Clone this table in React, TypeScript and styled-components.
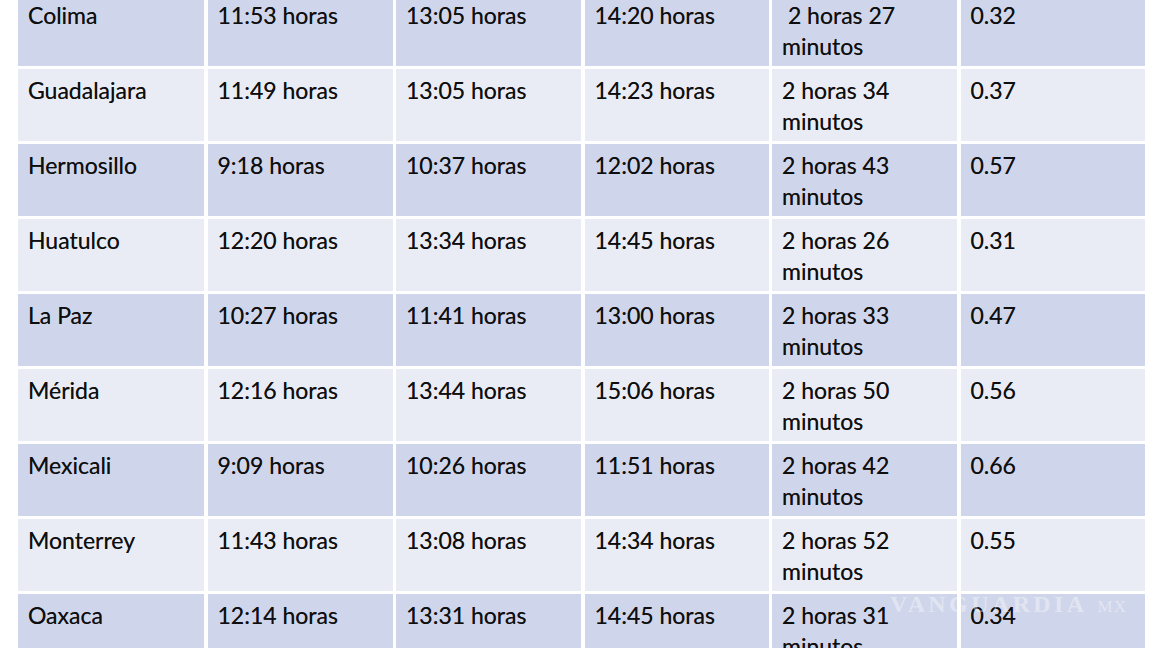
import React from "react";
import styled, { createGlobalStyle } from "styled-components";

const Global = createGlobalStyle`
  html, body { margin: 0; padding: 0; background: #ffffff; }
  body { width: 1152px; height: 648px; overflow: hidden; }
`;

const Page = styled.div`
  position: relative;
  width: 1152px;
  height: 648px;
  overflow: hidden;
  background: #ffffff;
  padding: 0 7px 0 18px;
  box-sizing: border-box;
`;

const Table = styled.div`
  display: grid;
  grid-template-columns: 186px 185px 185px 184px 185px 184px;
  column-gap: 3.5px;
  row-gap: 3.5px;
  margin-top: -6px;
  grid-auto-rows: 71.5px;
`;

const Cell = styled.div<{ $dark: boolean }>`
  background: ${(p) => (p.$dark ? "#cfd5ea" : "#e9ebf5")};
  padding: 6px 6px 0 10px;
  box-sizing: border-box;
  font-family: Lato, "Liberation Sans", sans-serif;
  font-size: 23px;
  line-height: 31px;
  color: #0e0e0e;
  letter-spacing: 0px;
  text-shadow: 0 0 0.4px rgba(0, 0, 0, 0.6);
`;

const Watermark = styled.div`
  position: absolute;
  left: 890px;
  top: 591px;
  display: flex;
  align-items: baseline;
  gap: 10px;
  color: rgba(255, 255, 255, 0.4);
  font-family: "Liberation Serif", serif;
  font-weight: bold;
  pointer-events: none;
`;

const Brand = styled.span`
  font-size: 24px;
  letter-spacing: 3.4px;
`;

const Mx = styled.span`
  font-size: 17px;
  font-weight: normal;
  letter-spacing: 1px;
`;

type Row = [string, string, string, string, string, string];

const rows: Row[] = [
  ["Colima", "11:53 horas", "13:05 horas", "14:20 horas", "\u00a02 horas 27 minutos", "0.32"],
  ["Guadalajara", "11:49 horas", "13:05 horas", "14:23 horas", "2 horas 34 minutos", "0.37"],
  ["Hermosillo", "9:18 horas", "10:37 horas", "12:02 horas", "2 horas 43 minutos", "0.57"],
  ["Huatulco", "12:20 horas", "13:34 horas", "14:45 horas", "2 horas 26 minutos", "0.31"],
  ["La Paz", "10:27 horas", "11:41 horas", "13:00 horas", "2 horas 33 minutos", "0.47"],
  ["Mérida", "12:16 horas", "13:44 horas", "15:06 horas", "2 horas 50 minutos", "0.56"],
  ["Mexicali", "9:09 horas", "10:26 horas", "11:51 horas", "2 horas 42 minutos", "0.66"],
  ["Monterrey", "11:43 horas", "13:08 horas", "14:34 horas", "2 horas 52 minutos", "0.55"],
  ["Oaxaca", "12:14 horas", "13:31 horas", "14:45 horas", "2 horas 31 minutos", "0.34"],
];

export default function App() {
  return (
    <>
      <Global />
      <Page>
        <Table>
          {rows.map((r, i) =>
            r.map((c, j) => (
              <Cell key={`${i}-${j}`} $dark={i % 2 === 0}>
                {c}
              </Cell>
            ))
          )}
        </Table>
        <Watermark>
          <Brand>VANGUARDIA</Brand>
          <Mx>MX</Mx>
        </Watermark>
      </Page>
    </>
  );
}
